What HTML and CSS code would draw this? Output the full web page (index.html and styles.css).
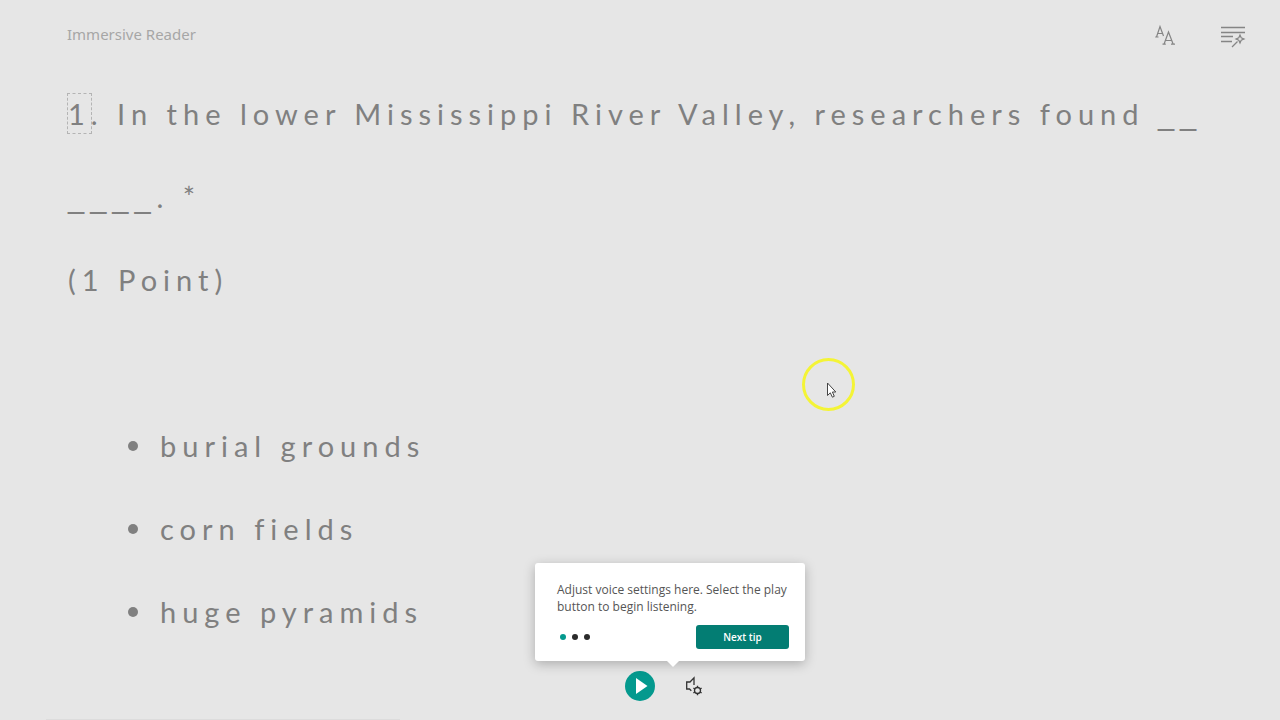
FILE: index.html
```html
<!DOCTYPE html>
<html lang="en">

<head>
    <meta charset="UTF-8">
    <meta name="viewport" content="width=device-width, initial-scale=1.0">
    <title>Immersive Reader</title>
    <link rel="stylesheet" href="styles.css">
</head>

<body>
    <header class="topbar">
        <h1 class="title">Immersive Reader</h1>
        <div class="tools">
            <button type="button" class="icon-btn" aria-label="Text preferences">
                <svg width="24" height="24" viewBox="0 0 24 24" fill="none" stroke="#858585" stroke-width="1.2">
                    <path d="M4.5 13L8 2.5L11.5 12M5.7 9.5H10.5M3.2 13H6.5" />
                    <path d="M12 20.2L16.5 8L21.2 20.2M13.4 16.5H19.8M10.5 20.2H13.8M19 20.2H23" />
                </svg>
            </button>
            <button type="button" class="icon-btn" aria-label="Grammar options">
                <svg width="26" height="24" viewBox="0 0 26 24" fill="none" stroke="#858585" stroke-width="1.3">
                    <path d="M1 3.5H25M1 8.5H25M1 12.5H13M1 17.5H12" />
                    <path d="M17.5 17.5L12 23" />
                    <path d="M20 11L21.2 13.8L24 15L21.2 16.2L20 19L18.8 16.2L16 15L18.8 13.8Z" stroke-width="1.2" />
                </svg>
            </button>
        </div>
    </header>

    <main class="reader">
        <p><span class="current">1</span>. In the lower Mississippi River Valley, researchers found <span class="blank">__<wbr>____</span>. *</p>
        <p>(1 Point)</p>
        <ul class="answers">
            <li>burial grounds</li>
            <li>corn fields</li>
            <li>huge pyramids</li>
        </ul>
    </main>

    <footer class="controls">
        <button type="button" class="play" aria-label="Play">
            <svg width="30" height="30" viewBox="0 0 30 30">
                <circle cx="15" cy="15" r="15" fill="#04998e" />
                <path d="M11 7L22.5 15L11 23Z" fill="#fff" />
            </svg>
        </button>
        <div class="voice">
            <button type="button" class="icon-btn" aria-label="Voice settings">
                <svg width="18" height="24" viewBox="0 -4 18 24" fill="none" stroke="#333" stroke-width="1.3">
                    <path d="M9 9V1.8L5 6H1.7V13H4.5L6.3 14.8" />
                    <circle cx="12.5" cy="14.5" r="3" />
                    <path d="M12.5 11.5V9.8M12.5 17.5V19.2M9.9 13L8.4 12.1M15.1 16L16.6 16.9M9.9 16L8.4 16.9M15.1 13L16.6 12.1" />
                </svg>
            </button>
            <div class="tip" role="dialog" aria-labelledby="tipText">
                <p id="tipText" class="tip-text">Adjust voice settings here. Select the play button to begin listening.</p>
                <div class="tip-footer">
                    <div class="dots">
                        <span class="dot active"></span>
                        <span class="dot"></span>
                        <span class="dot"></span>
                    </div>
                    <button type="button" class="next">Next tip</button>
                </div>
            </div>
        </div>
    </footer>

    <!-- Mouse pointer with highlight ring -->
    <div class="pointer">
        <svg width="56" height="56" viewBox="0 0 56 56">
            <circle cx="28.5" cy="28.5" r="25" fill="none" stroke="#f4f436" stroke-width="3" />
            <path d="M27.5 27V39.5L30.3 36.8L32.4 41.2L34.3 40.3L32.4 36H35.8Z" fill="#fff" stroke="#444" />
        </svg>
    </div>
</body>

</html>
```
FILE: styles.css
```css
* {
    margin: 0;
    padding: 0;
    box-sizing: border-box;
}

body {
    display: flex;
    flex-direction: column;
    height: 100vh;
    overflow: hidden;
    background-color: #e6e6e6;
    font-family: 'Open Sans', sans-serif;
}

/* Faint edge at the bottom of the window */
body::after {
    content: "";
    position: absolute;
    bottom: 0;
    left: 46px;
    width: 354px;
    height: 1px;
    background-color: #dcdcdc;
}

button {
    border: none;
    background: none;
    cursor: pointer;
}

svg {
    display: block;
}

/* Top bar */
.topbar {
    display: flex;
    justify-content: space-between;
    align-items: center;
    height: 72px;
    padding: 0 34px 0 67px;
}

.title {
    padding-bottom: 4px;
    color: #a6a6a6;
    font-family: 'Noto Sans', sans-serif;
    font-size: 15px;
    font-weight: normal;
}

.tools {
    display: flex;
    gap: 44px;
}

/* Reading area */
.reader {
    flex: 1;
    min-height: 0;
    padding: 0 67px 0 68px;
    color: #808080;
    font-family: Lato, sans-serif;
    font-size: 29px;
    line-height: 83px;
    letter-spacing: 6px;
}

.current {
    padding: 2px 0;
    outline: 1px dashed #b4b4b4;
}

.blank {
    font-family: 'Liberation Sans', sans-serif;
    line-height: 1;
}

.answers {
    margin-top: 83px;
    padding-left: 60px;
    list-style: none;
}

.answers li {
    display: flex;
    align-items: center;
    gap: 22px;
}

.answers li::before {
    content: "";
    width: 10px;
    height: 10px;
    border-radius: 50%;
    background-color: #808080;
}

/* Playback controls */
.controls {
    display: flex;
    justify-content: center;
    align-items: center;
    gap: 30px;
    padding: 0 0 19px 48px;
}

.voice {
    position: relative;
}

/* Tip */
.tip {
    position: absolute;
    right: -102px;
    bottom: 40px;
    width: 270px;
    padding: 18px 16px 12px 22px;
    border-radius: 3px;
    background-color: #fff;
    box-shadow: 0 3px 12px rgba(0, 0, 0, 0.25);
}

.tip::after {
    content: "";
    position: absolute;
    top: 100%;
    left: 132px;
    border: 6px solid transparent;
    border-top-color: #fff;
    border-bottom: none;
}

.tip-text {
    color: #555;
    font-size: 12px;
    line-height: 17px;
}

.tip-footer {
    display: flex;
    justify-content: space-between;
    align-items: center;
    margin-top: 10px;
}

.dots {
    display: flex;
    gap: 6px;
    padding-left: 3px;
}

.dot {
    width: 6px;
    height: 6px;
    border-radius: 50%;
    background-color: #2b2b2b;
}

.dot.active {
    background-color: #04998e;
}

.next {
    width: 93px;
    height: 24px;
    border-radius: 3px;
    background-color: #037d73;
    color: #fff;
    font-family: inherit;
    font-size: 10px;
    font-weight: 600;
}

.pointer {
    position: absolute;
    top: 356px;
    left: 800px;
    pointer-events: none;
}
```
